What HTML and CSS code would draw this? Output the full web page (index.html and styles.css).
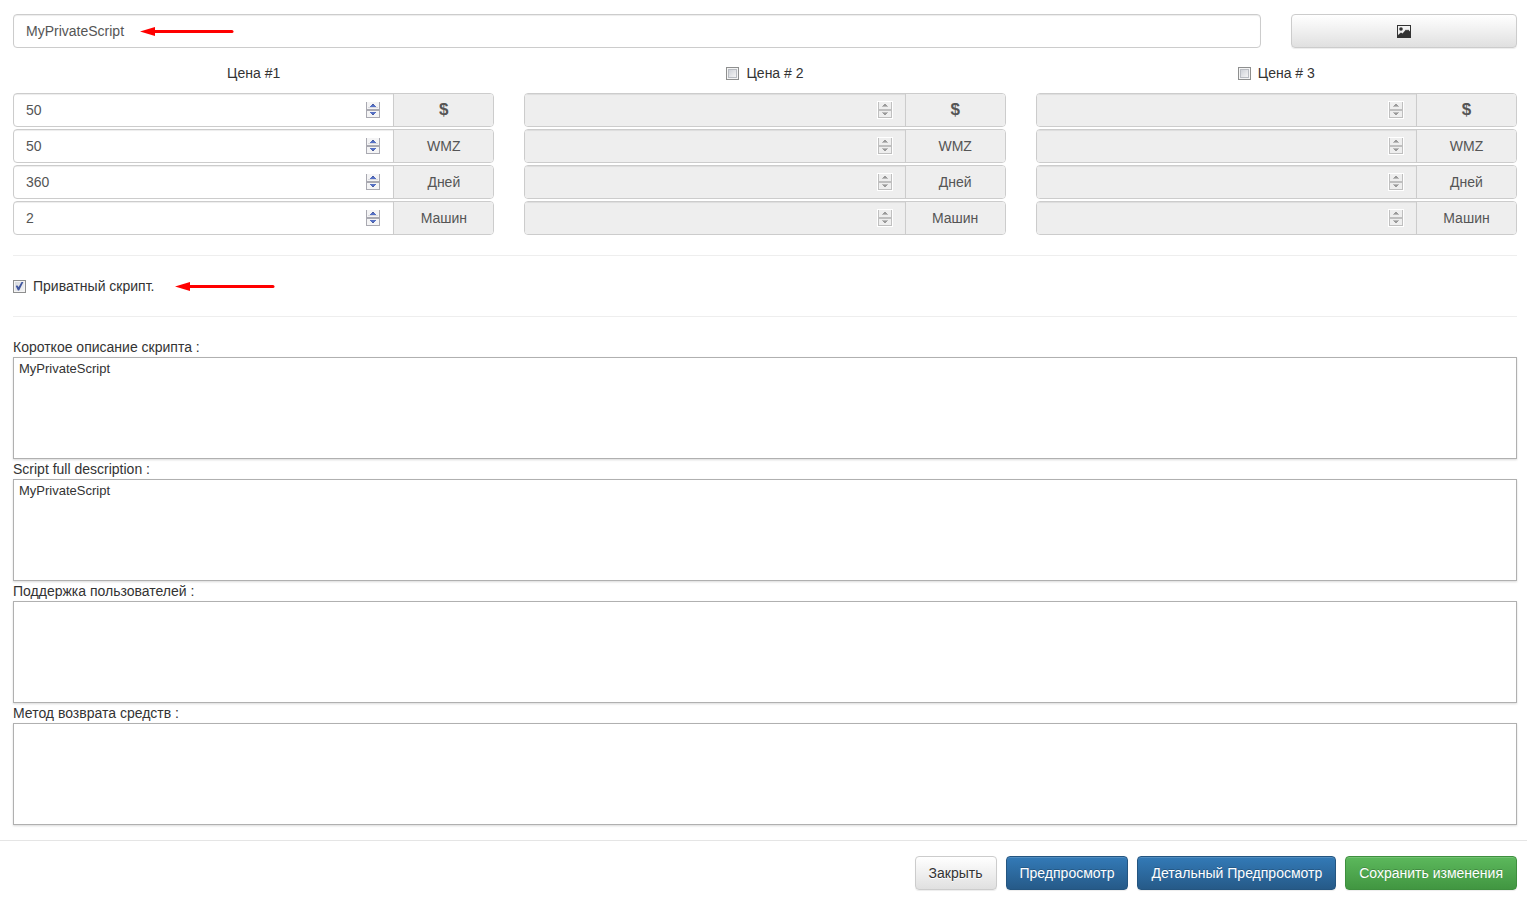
FILE: index.html
```
<!DOCTYPE html>
<html lang="ru">
<head>
    <meta charset="UTF-8">
    <meta name="viewport" content="width=device-width, initial-scale=1.0">
    <title>MyPrivateScript</title>
    <link rel="stylesheet" href="styles.css">
</head>
<body>
    <svg class="sprite" aria-hidden="true">
        <defs>
            <linearGradient id="btn-shade" x1="0" y1="0" x2="0" y2="1">
                <stop offset="0" stop-color="#fafafa"/>
                <stop offset="1" stop-color="#e4e4e8"/>
            </linearGradient>
        </defs>
        <symbol id="spin" viewBox="0 0 16 18" shape-rendering="crispEdges">
            <path fill="#a9a9b1" d="M1 1h14v16H1z"/>
            <path fill="#f4f4f5" d="M2 1h12v7H2zM2 10h12v6H2z"/>
            <path fill="#d9d9de" d="M3 6h10v1H3z"/>
            <path fill="#4a5a9c" d="M7 3h2v1H7zM7 13h2v1H7z"/>
            <path fill="#5570c4" d="M6 4h4v1H6zM5 5h6v1H5zM5 11h6v1H5zM6 12h4v1H6z"/>
        </symbol>
        <symbol id="spin-off" viewBox="0 0 16 18" shape-rendering="crispEdges">
            <path fill="#fff" d="M0 0h16v18H0z"/>
            <path fill="#bfbfbf" d="M1 1h14v16H1z"/>
            <path fill="#eee" d="M2 1h12v7H2zM2 10h12v6H2z"/>
            <path fill="#999" d="M7 3h2v1H7zM6 4h4v1H6zM6 12h4v1H6zM7 13h2v1H7z"/>
            <path fill="#bbb" d="M5 5h6v1H5zM5 11h6v1H5z"/>
        </symbol>
    </svg>

    <form action="#" id="form-script">
        <div class="contenido">
            <div class="fila">
                <div class="nombre">
                    <input type="text" class="control" name="nombre" value="MyPrivateScript" aria-label="MyPrivateScript">
                    <svg class="flecha flecha-nombre" width="94" height="9" viewBox="0 0 94 9" aria-hidden="true">
                        <path fill="#f00" d="M0 4.500L15 0V9z"/>
                        <path stroke="#f00" stroke-width="3" stroke-linecap="round" d="M14 4.500H92"/>
                    </svg>
                </div>
                <button type="button" class="btn imagen" aria-label="Image">
                    <svg width="14" height="13" viewBox="0 0 14 13" aria-hidden="true">
                        <path fill="#333" fill-rule="evenodd" d="M0 0h14v13H0zM1 1v9l3-2.500 1.500 1L9 4.500l1 1 1-1 2 2V1z"/>
                        <circle fill="#333" cx="4" cy="4" r="1.800"/>
                    </svg>
                </button>
            </div>

            <div class="precios">
                <div class="precio">
                    <div class="titulo">Цена #1</div>
                    <div class="grupo">
                        <div class="campo"><input type="number" id="usd1" value="50"><svg><use href="#spin"/></svg></div>
                        <label class="unidad usd" for="usd1">$</label>
                    </div>
                    <div class="grupo">
                        <div class="campo"><input type="number" id="wmz1" value="50"><svg><use href="#spin"/></svg></div>
                        <label class="unidad" for="wmz1">WMZ</label>
                    </div>
                    <div class="grupo">
                        <div class="campo"><input type="number" id="dias1" value="360"><svg><use href="#spin"/></svg></div>
                        <label class="unidad" for="dias1">Дней</label>
                    </div>
                    <div class="grupo">
                        <div class="campo"><input type="number" id="pc1" value="2"><svg><use href="#spin"/></svg></div>
                        <label class="unidad" for="pc1">Машин</label>
                    </div>
                </div>
                <div class="precio">
                    <label class="titulo"><input type="checkbox" name="precio2">Цена # 2</label>
                    <div class="grupo">
                        <div class="campo"><input type="number" id="usd2" disabled><svg><use href="#spin-off"/></svg></div>
                        <label class="unidad usd" for="usd2">$</label>
                    </div>
                    <div class="grupo">
                        <div class="campo"><input type="number" id="wmz2" disabled><svg><use href="#spin-off"/></svg></div>
                        <label class="unidad" for="wmz2">WMZ</label>
                    </div>
                    <div class="grupo">
                        <div class="campo"><input type="number" id="dias2" disabled><svg><use href="#spin-off"/></svg></div>
                        <label class="unidad" for="dias2">Дней</label>
                    </div>
                    <div class="grupo">
                        <div class="campo"><input type="number" id="pc2" disabled><svg><use href="#spin-off"/></svg></div>
                        <label class="unidad" for="pc2">Машин</label>
                    </div>
                </div>
                <div class="precio">
                    <label class="titulo"><input type="checkbox" name="precio3">Цена # 3</label>
                    <div class="grupo">
                        <div class="campo"><input type="number" id="usd3" disabled><svg><use href="#spin-off"/></svg></div>
                        <label class="unidad usd" for="usd3">$</label>
                    </div>
                    <div class="grupo">
                        <div class="campo"><input type="number" id="wmz3" disabled><svg><use href="#spin-off"/></svg></div>
                        <label class="unidad" for="wmz3">WMZ</label>
                    </div>
                    <div class="grupo">
                        <div class="campo"><input type="number" id="dias3" disabled><svg><use href="#spin-off"/></svg></div>
                        <label class="unidad" for="dias3">Дней</label>
                    </div>
                    <div class="grupo">
                        <div class="campo"><input type="number" id="pc3" disabled><svg><use href="#spin-off"/></svg></div>
                        <label class="unidad" for="pc3">Машин</label>
                    </div>
                </div>
            </div>

            <hr>
            <div class="privado">
                <label><input type="checkbox" name="privado" checked>Приватный скрипт.</label>
                <svg class="flecha" width="100" height="9" viewBox="0 0 100 9" aria-hidden="true">
                    <path fill="#f00" d="M0 4.500L15 0V9z"/>
                    <path stroke="#f00" stroke-width="3" stroke-linecap="round" d="M14 4.500H98"/>
                </svg>
            </div>
            <hr>

            <div class="texto">
                <label for="corta">Короткое описание скрипта :</label>
                <textarea id="corta">MyPrivateScript</textarea>
            </div>
            <div class="texto">
                <label for="completa">Script full description :</label>
                <textarea id="completa">MyPrivateScript</textarea>
            </div>
            <div class="texto">
                <label for="soporte">Поддержка пользователей :</label>
                <textarea id="soporte"></textarea>
            </div>
            <div class="texto">
                <label for="reembolso">Метод возврата средств :</label>
                <textarea id="reembolso"></textarea>
            </div>
        </div>

        <div class="botones">
            <button type="button" class="btn">Закрыть</button>
            <button type="button" class="btn azul">Предпросмотр</button>
            <button type="button" class="btn azul">Детальный Предпросмотр</button>
            <button type="submit" class="btn verde">Сохранить изменения</button>
        </div>
    </form>
</body>
</html>
```
FILE: styles.css
```
*{
    box-sizing: border-box;
}
body{
    margin: 0;
    background: #fff;
    color: #333;
    font-family: "Liberation Sans", Arial, sans-serif;
    font-size: 14px;
    line-height: 20px;
}
input, button, textarea{
    margin: 0;
    font-family: inherit;
    font-size: 14px;
    line-height: 20px;
}
.sprite{
    position: absolute;
    width: 0;
    height: 0;
}
.contenido{
    padding: 14px 10px 15px 13px;
}

/* nombre e imagen */
.fila{
    display: grid;
    grid-template-columns: repeat(12, 1fr);
    column-gap: 30px;
}
.nombre{
    position: relative;
    grid-column: span 10;
}
.imagen{
    grid-column: span 2;
}
.control{
    display: block;
    width: 100%;
    height: 34px;
    padding: 6px 12px;
    border: 1px solid #ccc;
    border-radius: 4px;
    color: #555;
    box-shadow: inset 0 1px 1px rgba(0, 0, 0, 0.075);
}
.flecha{
    display: block;
    fill: none;
}
.flecha-nombre{
    position: absolute;
    left: 127px;
    top: 13px;
}

/* precios */
.precios{
    display: grid;
    grid-template-columns: repeat(3, 1fr);
    column-gap: 30px;
    margin-top: 15px;
}
.precio{
    display: flex;
    flex-direction: column;
    gap: 2px;
}
.titulo{
    display: flex;
    align-items: center;
    justify-content: center;
    margin-bottom: 8px;
}
.grupo{
    display: flex;
    height: 34px;
    border: 1px solid #ccc;
    border-radius: 4px;
    overflow: hidden;
}
.campo{
    display: flex;
    flex: 1;
    align-items: center;
    padding: 0 12px;
    box-shadow: inset 0 1px 1px rgba(0, 0, 0, 0.075);
}
.campo:has(input:disabled){
    background: #eee;
}
.campo input{
    flex: 1;
    min-width: 0;
    padding: 0;
    border: 0;
    background: transparent;
    color: #555;
    appearance: textfield;
}
.campo input::-webkit-inner-spin-button{
    appearance: none;
    margin: 0;
}
.campo svg{
    width: 16px;
    height: 18px;
}
.unidad{
    display: flex;
    align-items: center;
    justify-content: center;
    width: 100px;
    border-left: 1px solid #ccc;
    background: #eee;
    color: #555;
}
.usd{
    font-size: 17px;
    font-weight: bold;
}

input[type="checkbox"]{
    appearance: none;
    display: flex;
    width: 13px;
    height: 13px;
    margin-right: 7px;
    padding: 1px;
    border: 1px solid #8e8f8f;
    background: #f4f4f4;
}
input[type="checkbox"]::before{
    content: "";
    flex: 1;
    border: 1px solid #b9bcc2;
    background: linear-gradient(135deg, #cfd2d8, #f4f4f4);
}
input[type="checkbox"]:checked::before{
    border: 0;
    background: #41579f;
    clip-path: polygon(8% 50%, 24% 42%, 40% 62%, 76% 0, 96% 0, 46% 100%, 32% 100%);
}
input[type="checkbox"]:checked{
    background: linear-gradient(135deg, #d3d6dc, #f6f6f6);
    box-shadow: inset 0 0 0 1px #f4f4f4;
}

hr{
    height: 1px;
    margin: 20px 0;
    border: 0;
    background: #eee;
}
.privado{
    display: flex;
    align-items: center;
    gap: 21px;
}
.privado label{
    display: flex;
    align-items: center;
}

/* descripciones */
.texto{
    display: flex;
    flex-direction: column;
}
.texto label{
    align-self: flex-start;
}
.texto textarea{
    height: 102px;
    padding: 2px 5px;
    border: 1px solid #b0b0b0;
    color: #333;
    font-size: 13px;
    line-height: 18px;
    resize: none;
    box-shadow: 0 1px 2px rgba(0, 0, 0, 0.15);
}

/* botones */
.botones{
    display: flex;
    justify-content: flex-end;
    gap: 9px;
    padding: 15px 10px 11px;
    border-top: 1px solid #e5e5e5;
}
.btn{
    display: flex;
    align-items: center;
    justify-content: center;
    height: 34px;
    padding: 6px 13px;
    border: 1px solid #ccc;
    border-radius: 4px;
    background: linear-gradient(to bottom, #fff, #e0e0e0);
    color: #333;
    text-shadow: 0 1px 0 #fff;
    box-shadow: inset 0 1px 0 rgba(255, 255, 255, 0.15), 0 1px 1px rgba(0, 0, 0, 0.075);
}
.azul{
    border-color: #245580;
    background: linear-gradient(to bottom, #337ab7, #265a88);
    color: #fff;
    text-shadow: 0 -1px 0 rgba(0, 0, 0, 0.2);
}
.verde{
    border-color: #3e8f3e;
    background: linear-gradient(to bottom, #5cb85c, #419641);
    color: #fff;
    text-shadow: 0 -1px 0 rgba(0, 0, 0, 0.2);
}
```
